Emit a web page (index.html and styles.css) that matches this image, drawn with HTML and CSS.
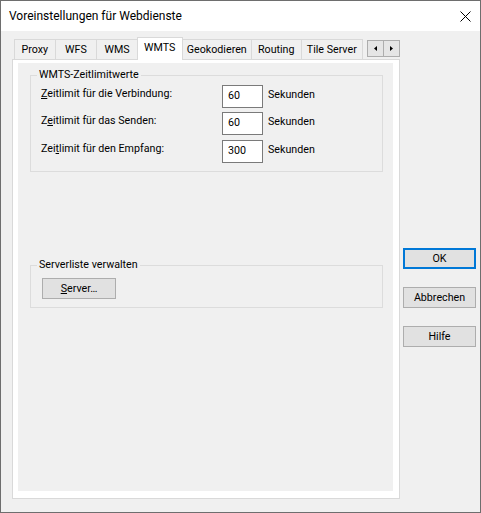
FILE: index.html
```html
<!DOCTYPE html>
<html lang="de">
<head>
<meta charset="utf-8">
<title>Voreinstellungen für Webdienste</title>
<link rel="stylesheet" href="styles.css">
</head>
<body>
<div class="window">
  <div class="titlebar">
    <span class="title">Voreinstellungen für Webdienste</span>
    <svg class="close" width="11" height="11" viewBox="0 0 11 11"><path d="M0.5 0.5 L10.5 10.5 M10.5 0.5 L0.5 10.5" stroke="#000" stroke-width="1" fill="none"/></svg>
  </div>
  <div class="client">
    <div class="left">
      <div class="tabs">
        <div class="tab t-proxy">Proxy</div>
        <div class="tab t-wfs">WFS</div>
        <div class="tab t-wms">WMS</div>
        <div class="tab selected">WMTS</div>
        <div class="tab t-geo">Geokodieren</div>
        <div class="tab t-routing">Routing</div>
        <div class="tab t-tile">Tile Server</div>
        <div class="scroller">
          <span class="arrow"><svg width="3" height="5" viewBox="0 0 3 5"><path d="M3 0 L0 2.5 L3 5 Z" fill="#000"/></svg></span>
          <span class="arrow"><svg width="3" height="5" viewBox="0 0 3 5"><path d="M0 0 L3 2.5 L0 5 Z" fill="#000"/></svg></span>
        </div>
      </div>
      <div class="panel">
        <div class="page">
          <fieldset class="group g-times">
            <legend>WMTS-Zeitlimitwerte</legend>
            <div class="rows">
              <div class="row">
                <span class="label"><u>Z</u>eitlimit für die Verbindung:</span>
                <span class="input">60</span>
                <span class="unit">Sekunden</span>
              </div>
              <div class="row">
                <span class="label">Z<u>e</u>itlimit für das Senden:</span>
                <span class="input">60</span>
                <span class="unit">Sekunden</span>
              </div>
              <div class="row row-last">
                <span class="label">Zei<u>t</u>limit für den Empfang:</span>
                <span class="input">300</span>
                <span class="unit">Sekunden</span>
              </div>
            </div>
          </fieldset>
          <fieldset class="group g-server">
            <legend>Serverliste verwalten</legend>
            <button class="btn btn-server"><u>S</u>erver…</button>
          </fieldset>
        </div>
      </div>
    </div>
    <div class="right">
      <button class="btn btn-default">OK</button>
      <button class="btn">Abbrechen</button>
      <button class="btn">Hilfe</button>
    </div>
  </div>
</div>
</body>
</html>
```
FILE: styles.css
```css
* { box-sizing: border-box; }
html, body { margin: 0; padding: 0; }
body {
  width: 481px;
  height: 513px;
  background: #f0f0f0;
  font-family: Roboto, "Noto Sans", sans-serif;
  font-size: 10.7px;
  color: #000;
}
.window {
  width: 481px;
  height: 513px;
  border: 1px solid #6e6e6e;
  background: #f0f0f0;
  display: flex;
  flex-direction: column;
}
.titlebar {
  height: 30px;
  background: #fff;
  display: flex;
  align-items: center;
  justify-content: space-between;
  padding-left: 8px;
  padding-right: 9px;
}
.title { font-size: 12px; line-height: 16px; }
.close { display: block; }
.client {
  display: flex;
  padding: 6px 0 0 11px;
  gap: 3px;
}
.left { width: 388px; }
.tabs {
  height: 22px;
  display: flex;
  align-items: flex-end;
  padding-left: 2px;
}
.tab {
  height: 20px;
  border: 1px solid #d9d9d9;
  border-bottom: none;
  margin-right: -1px;
  display: flex;
  align-items: center;
  justify-content: center;
  line-height: 16px;
  background: #f0f0f0;
  white-space: nowrap;
}
.t-proxy { width: 42px; }
.t-wfs { width: 43px; }
.t-wms { width: 42px; }
.t-geo { width: 71px; }
.t-routing { width: 51px; }
.t-tile { width: 63px; }
.tab.selected {
  width: 46px;
  height: 23px;
  margin-bottom: -1px;
  background: #fff;
  position: relative;
  z-index: 1;
  padding-bottom: 3px;
}
.scroller {
  align-self: flex-start;
  margin-top: 3px;
  margin-left: 5px;
  display: flex;
}
.arrow {
  width: 17px;
  height: 17px;
  border: 1px solid #adadad;
  background: #e5e5e5;
  display: flex;
  align-items: center;
  justify-content: center;
}
.arrow + .arrow { margin-left: -1px; }
.arrow svg { display: block; }
.panel {
  width: 388px;
  height: 440px;
  border: 1px solid #d9d9d9;
  background: #fff;
  padding: 3px 6px 7px 5px;
}
.page {
  height: 428px;
  background: #f0f0f0;
  padding: 0 10px 0 12px;
  overflow: hidden;
}
.group {
  margin: 0;
  border: 1px solid #dcdcdc;
  min-width: 0;
}
.group legend {
  padding: 0 2px;
  margin-left: -4px;
  line-height: 14px;
}
.g-times {
  margin-top: 5px;
  padding: 3px 0 8px 10px;
}
.g-server {
  margin-top: 86px;
  padding: 6px 0 8px 11px;
}
.g-server legend { margin-left: -5px; }
.rows {
  display: flex;
  flex-direction: column;
  gap: 4px;
}
.row {
  display: grid;
  grid-template-columns: 181px 41px auto;
  align-items: start;
  height: 23px;
}
.row-last { margin-top: 1px; }
.label {
  line-height: 16px;
  padding-top: 1px;
  white-space: nowrap;
}
.input {
  height: 23px;
  border: 1px solid #7a7a7a;
  background: #fff;
  padding-left: 5px;
  line-height: 20px;
}
.unit {
  margin-left: 5px;
  padding-top: 2px;
  line-height: 16px;
}
.btn {
  font-family: inherit;
  font-size: 10.7px;
  color: #000;
  background: #e1e1e1;
  border: 1px solid #adadad;
  height: 21px;
  padding: 0;
  line-height: 17px;
  margin: 0;
  display: block;
}
.btn-server { width: 74px; }
.right {
  width: 73px;
  margin-top: 211px;
  display: flex;
  flex-direction: column;
  gap: 18px;
}
.right .btn { width: 73px; }
.btn-default { border: 2px solid #0078d7; }
```
